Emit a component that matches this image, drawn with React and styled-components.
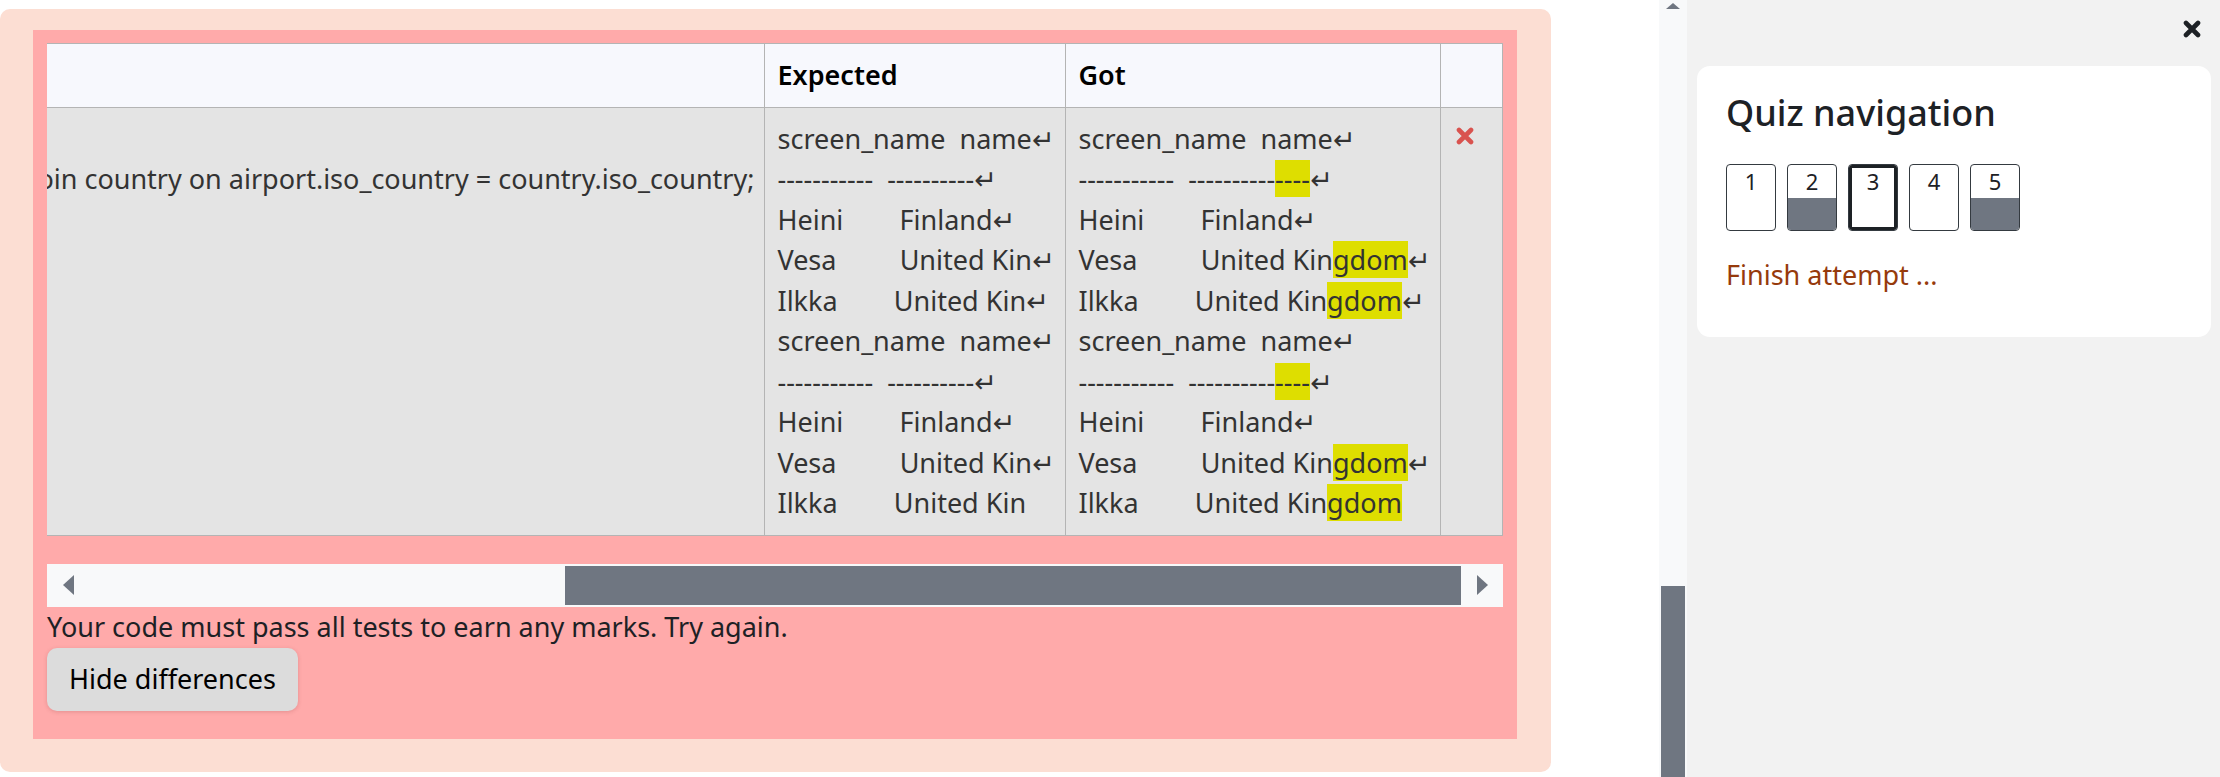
import { useLayoutEffect, useRef, useState } from "react";
import styled, { createGlobalStyle } from "styled-components";

const GlobalStyle = createGlobalStyle`
  html, body {
    margin: 0;
    padding: 0;
  }
  body {
    font-family: "Noto Sans", "Open Sans", "DejaVu Sans", sans-serif;
    color: #1d2125;
    background: #fff;
    overflow: hidden;
  }
`;

const Page = styled.div`
  display: flex;
  width: 2220px;
  height: 777px;
  overflow: hidden;
`;

const Main = styled.main`
  flex: 0 0 1659px;
  box-sizing: border-box;
  padding-top: 9px;
`;

const Outcome = styled.div`
  width: 1551px;
  box-sizing: border-box;
  padding: 21px 34px 33px 33px;
  background: #fcded3;
  border-radius: 10px;
`;

const Results = styled.div`
  background: #ffaaaa;
  padding: 13px 14px 28px;
`;

const Scroller = styled.div`
  overflow: hidden;
`;

const Table = styled.table`
  width: max-content;
  border-collapse: collapse;
  margin-bottom: 28px;
  font-size: 27px;
  line-height: 40.5px;
  white-space: pre;
`;

const Th = styled.th`
  text-align: left;
  font-weight: 600;
  color: #000;
  background: #f7f8fd;
  padding: 11px 10px 11px 12px;
  border: 1px solid #b4b4b4;
  width: ${(p) => (p.$w ? `${p.$w}px` : "auto")};
`;

const Td = styled.td`
  vertical-align: top;
  background: #e4e4e4;
  color: #333;
  padding: 11px 10px 11px 12px;
  border: 1px solid #b4b4b4;
`;

const Line = styled.div`
  display: block;
`;

const Diff = styled.span`
  background: #dede00;
`;

const Cross = styled.svg`
  display: block;
  width: 18px;
  height: 18px;
  margin: ${(p) => p.$m || "0"};
  color: ${(p) => p.$color};
`;

const HScroll = styled.div`
  display: flex;
  height: 43px;
  background: #f8f9fa;
`;

const ArrowBox = styled.div`
  flex: 0 0 ${(p) => p.$w}px;
  display: flex;
  align-items: center;
  justify-content: center;
`;

const Tri = styled.span`
  width: 0;
  height: 0;
  border-top: 10.5px solid transparent;
  border-bottom: 10.5px solid transparent;
  ${(p) => (p.$dir === "left" ? "border-right" : "border-left")}: 11px solid #6f7681;
`;

const Track = styled.div`
  flex: 1;
  display: flex;
  padding: 2px 0;
`;

const Thumb = styled.div`
  margin-left: auto;
  background: #6f7681;
`;

const Message = styled.p`
  margin: 0;
  font-size: 27px;
  line-height: 40.5px;
  color: #1d2125;
`;

const Button = styled.button`
  margin-top: 1px;
  font-family: inherit;
  font-size: 27px;
  line-height: 40.5px;
  padding: 11px 22px;
  color: #000;
  background: #dcdcdc;
  border: none;
  border-radius: 10px;
  box-shadow: 0 1px 4px rgba(120, 40, 40, 0.2);
`;

const VScroll = styled.div`
  flex: 0 0 28px;
  display: flex;
  flex-direction: column;
  background: #f8f9fa;
`;

const UpArrow = styled.div`
  align-self: center;
  margin-top: 3px;
  width: 0;
  height: 0;
  border-left: 7px solid transparent;
  border-right: 7px solid transparent;
  border-bottom: 6px solid #6f7681;
`;

const VThumb = styled.div`
  margin: auto 2px 0;
  height: 191px;
  background: #6f7681;
`;

const Drawer = styled.aside`
  flex: 1;
  background: #f2f2f2;
  box-sizing: border-box;
  padding: 0 9px 0 10px;
`;

const DrawerHeader = styled.div`
  height: 66px;
  box-sizing: border-box;
  display: flex;
  justify-content: flex-end;
  padding: 20px 10px 0 0;
`;

const Card = styled.section`
  background: #fff;
  border-radius: 13px;
  padding: 27px 29px 42px;
`;

const CardTitle = styled.h5`
  margin: 0 0 30px;
  font-size: 36px;
  line-height: 40.8px;
  font-weight: 500;
  color: #1d2125;
`;

const QnRow = styled.div`
  display: flex;
  gap: 11px;
`;

const QnButton = styled.div`
  width: 50px;
  height: 67px;
  box-sizing: border-box;
  display: flex;
  flex-direction: column;
  border: 1px solid #343a40;
  border-radius: 4px;
  overflow: hidden;
  background: #fff;
  box-shadow: ${(p) => (p.$current ? "inset 0 0 0 3px #1d2125" : "none")};
`;

const QnNumber = styled.span`
  height: 33px;
  box-sizing: border-box;
  padding-top: 3px;
  text-align: center;
  font-size: 22px;
  line-height: 26px;
  color: #1d2125;
`;

const QnFill = styled.span`
  flex: 1;
  background: ${(p) => (p.$saved ? "#6f7681" : "transparent")};
`;

const FinishLink = styled.a`
  display: block;
  margin-top: 24px;
  font-size: 27px;
  line-height: 40.5px;
  color: #963a0c;
  text-decoration: none;
`;

function CrossIcon({ color, m }) {
  return (
    <Cross viewBox="0 0 18 18" $color={color} $m={m}>
      <path
        d="M3 3 L15 15 M15 3 L3 15"
        stroke="currentColor"
        strokeWidth="4.6"
        strokeLinecap="round"
        fill="none"
      />
    </Cross>
  );
}

const block = [
  [["screen_name  name↵"]],
  [["-----------  ----------"], ["----", true], ["↵"]],
  [["Heini        Finland↵"]],
  [["Vesa         United Kin"], ["gdom", true], ["↵"]],
  [["Ilkka        United Kin"], ["gdom", true], ["↵"]],
];

const gotLines = [...block, ...block.slice(0, 4), [["Ilkka        United Kin"], ["gdom", true]]];

const expectedLines = gotLines.map((segs) =>
  segs.filter(([, hl]) => !hl).map(([t]) => t).join("")
);

const testLines = [
  "-- Screen names with country names",
  "select screen_name, country.name from airport inner join country on airport.iso_country = country.iso_country;",
];

const questions = [
  { n: 1 },
  { n: 2, saved: true },
  { n: 3, current: true },
  { n: 4 },
  { n: 5, saved: true },
];

export default function App() {
  const scrollRef = useRef(null);
  const trackRef = useRef(null);
  const [thumb, setThumb] = useState(0);

  useLayoutEffect(() => {
    const el = scrollRef.current;
    el.scrollLeft = el.scrollWidth;
    const ratio = el.clientWidth / el.scrollWidth;
    const track = trackRef.current.clientWidth;
    setThumb(Math.round(track * ratio));
  }, []);

  return (
    <Page>
      <GlobalStyle />
      <Main>
        <Outcome>
          <Results>
            <Scroller ref={scrollRef}>
              <Table>
                <thead>
                  <tr>
                    <Th $w={39}></Th>
                    <Th>Test</Th>
                    <Th $w={278}>Expected</Th>
                    <Th $w={349}>Got</Th>
                    <Th $w={39}></Th>
                  </tr>
                </thead>
                <tbody>
                  <tr>
                    <Td>
                      <CrossIcon color="#d9534f" m="8px 0 0 3px" />
                    </Td>
                    <Td>
                      {testLines.map((l, i) => (
                        <Line key={i}>{l}</Line>
                      ))}
                    </Td>
                    <Td>
                      {expectedLines.map((l, i) => (
                        <Line key={i}>{l}</Line>
                      ))}
                    </Td>
                    <Td>
                      {gotLines.map((segs, i) => (
                        <Line key={i}>
                          {segs.map(([t, hl], j) =>
                            hl ? <Diff key={j}>{t}</Diff> : <span key={j}>{t}</span>
                          )}
                        </Line>
                      ))}
                    </Td>
                    <Td>
                      <CrossIcon color="#d9534f" m="8px 0 0 3px" />
                    </Td>
                  </tr>
                </tbody>
              </Table>
            </Scroller>
            <HScroll>
              <ArrowBox $w={43}>
                <Tri $dir="left" />
              </ArrowBox>
              <Track ref={trackRef}>
                <Thumb style={{ width: thumb }} />
              </Track>
              <ArrowBox $w={42}>
                <Tri $dir="right" />
              </ArrowBox>
            </HScroll>
            <Message>Your code must pass all tests to earn any marks. Try again.</Message>
            <Button>Hide differences</Button>
          </Results>
        </Outcome>
      </Main>
      <VScroll>
        <UpArrow />
        <VThumb />
      </VScroll>
      <Drawer>
        <DrawerHeader>
          <CrossIcon color="#1d2125" />
        </DrawerHeader>
        <Card>
          <CardTitle>Quiz navigation</CardTitle>
          <QnRow>
            {questions.map((q) => (
              <QnButton key={q.n} $current={q.current}>
                <QnNumber>{q.n}</QnNumber>
                <QnFill $saved={q.saved} />
              </QnButton>
            ))}
          </QnRow>
          <FinishLink href="#">Finish attempt ...</FinishLink>
        </Card>
      </Drawer>
    </Page>
  );
}
